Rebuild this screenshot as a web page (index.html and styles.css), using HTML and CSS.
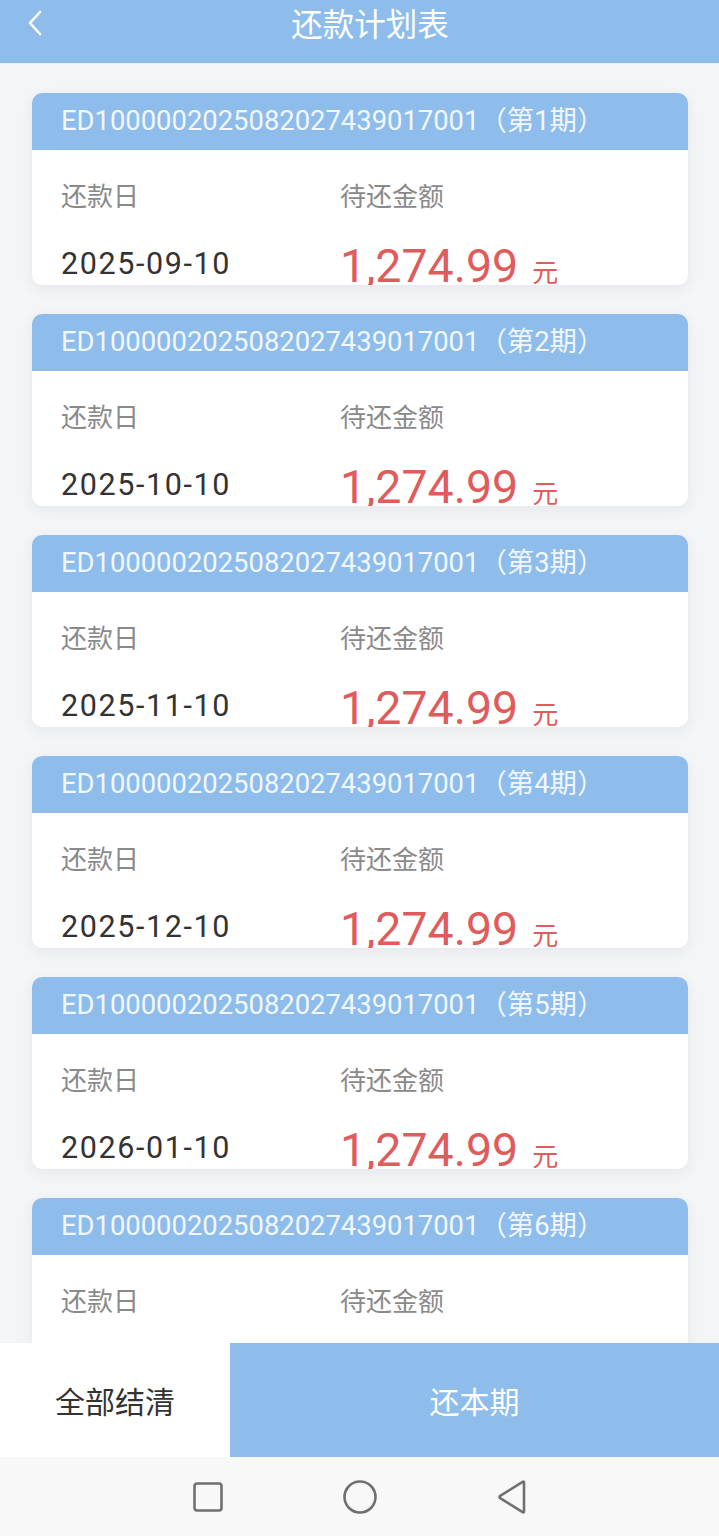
FILE: index.html
```html
<!DOCTYPE html>
<html lang="zh-CN">

<head>
    <meta charset="UTF-8">
    <meta name="viewport" content="width=device-width, initial-scale=1.0">
    <title>还款计划表</title>
    <link rel="stylesheet" href="styles.css">
</head>

<body>
    <header class="topbar">
        <svg class="back" width="20" height="28" viewBox="0 0 20 28">
            <path d="M15 3 L5 14 L15 25" fill="none" stroke="#fff" stroke-width="2.6" stroke-linecap="round" stroke-linejoin="round" />
        </svg>
        <h1>还款计划表</h1>
    </header>

    <main class="plan-list">
        <div class="card">
            <div class="card-head">ED1000002025082027439017001（第1期）</div>
            <div class="card-body">
                <div class="col col-date">
                    <div class="label">还款日</div>
                    <div class="date">2025-09-10</div>
                </div>
                <div class="col col-amount">
                    <div class="label">待还金额</div>
                    <div class="amount">1,274.99<span class="unit">元</span></div>
                </div>
            </div>
        </div>
        <div class="card">
            <div class="card-head">ED1000002025082027439017001（第2期）</div>
            <div class="card-body">
                <div class="col col-date">
                    <div class="label">还款日</div>
                    <div class="date">2025-10-10</div>
                </div>
                <div class="col col-amount">
                    <div class="label">待还金额</div>
                    <div class="amount">1,274.99<span class="unit">元</span></div>
                </div>
            </div>
        </div>
        <div class="card">
            <div class="card-head">ED1000002025082027439017001（第3期）</div>
            <div class="card-body">
                <div class="col col-date">
                    <div class="label">还款日</div>
                    <div class="date">2025-11-10</div>
                </div>
                <div class="col col-amount">
                    <div class="label">待还金额</div>
                    <div class="amount">1,274.99<span class="unit">元</span></div>
                </div>
            </div>
        </div>
        <div class="card">
            <div class="card-head">ED1000002025082027439017001（第4期）</div>
            <div class="card-body">
                <div class="col col-date">
                    <div class="label">还款日</div>
                    <div class="date">2025-12-10</div>
                </div>
                <div class="col col-amount">
                    <div class="label">待还金额</div>
                    <div class="amount">1,274.99<span class="unit">元</span></div>
                </div>
            </div>
        </div>
        <div class="card">
            <div class="card-head">ED1000002025082027439017001（第5期）</div>
            <div class="card-body">
                <div class="col col-date">
                    <div class="label">还款日</div>
                    <div class="date">2026-01-10</div>
                </div>
                <div class="col col-amount">
                    <div class="label">待还金额</div>
                    <div class="amount">1,274.99<span class="unit">元</span></div>
                </div>
            </div>
        </div>
        <!-- last card runs under the action bar -->
        <div class="card">
            <div class="card-head">ED1000002025082027439017001（第6期）</div>
            <div class="card-body">
                <div class="col col-date">
                    <div class="label">还款日</div>
                </div>
                <div class="col col-amount">
                    <div class="label">待还金额</div>
                </div>
            </div>
        </div>
    </main>

    <footer class="action-bar">
        <button class="btn-settle">全部结清</button>
        <button class="btn-pay">还本期</button>
    </footer>

    <nav class="sys-nav">
        <svg width="32" height="32" viewBox="0 0 32 32">
            <rect x="2.5" y="2.5" width="27" height="27" rx="2.5" fill="none" stroke="#707070" stroke-width="2.6" />
        </svg>
        <svg width="36" height="36" viewBox="0 0 36 36">
            <circle cx="18" cy="18" r="15.5" fill="none" stroke="#707070" stroke-width="2.6" />
        </svg>
        <svg width="32" height="36" viewBox="0 0 32 36">
            <path d="M28 3.5 L28 32.5 Q28 34 26.6 33.2 L4.2 19.2 Q2.8 18 4.2 16.8 L26.6 2.8 Q28 2 28 3.5 Z" fill="none" stroke="#707070" stroke-width="2.6" stroke-linejoin="round" />
        </svg>
    </nav>
</body>

</html>
```

FILE: styles.css
```css
body {
    margin: 0;
    width: 719px;
    height: 1536px;
    display: flex;
    flex-direction: column;
    overflow: hidden;
    background: #f4f5f7;
    font-family: Roboto, 'Noto Sans CJK SC', sans-serif;
}

.topbar {
    height: 63px;
    flex: none;
    display: flex;
    justify-content: center;
    background: #8ebdec;
    border-bottom: 1px solid #e4f1fb;
    position: relative;
}

.topbar h1 {
    margin: 0;
    padding-left: 21px;
    font-family: 'Noto Sans CJK SC', sans-serif;
    font-size: 31.5px;
    font-weight: 400;
    line-height: 44px;
    color: #fff;
}

.back {
    position: absolute;
    left: 25px;
    top: 9px;
}

.plan-list {
    flex: 1;
    overflow: hidden;
    padding: 29px 31px 0 32px;
    display: flex;
    flex-direction: column;
    gap: 29px;
}

.card {
    flex: none;
    height: 192px;
    border-radius: 10px;
    overflow: hidden;
    background: #fff;
    box-shadow: 0 4px 14px rgba(40, 60, 90, 0.07);
}

.card-head {
    height: 57px;
    padding-left: 29px;
    background: #8ebdec;
    color: #f2f7fd;
    font-size: 27.4px;
    line-height: 57px;
    white-space: nowrap;
}

.card-body {
    display: flex;
    padding: 30px 0 0 29px;
}

.col-date {
    width: 279px;
}

.label {
    font-family: 'Noto Sans CJK SC', sans-serif;
    font-size: 26px;
    line-height: 30px;
    color: #8a8a8a;
}

.date {
    margin-top: 34px;
    font-size: 30.5px;
    line-height: 40px;
    letter-spacing: 1.6px;
    color: #333;
}

.amount {
    margin-top: 31px;
    font-size: 46.5px;
    line-height: 50px;
    color: #e05b5b;
    white-space: nowrap;
}

.unit {
    margin-left: 14px;
    font-family: 'Noto Sans CJK SC', sans-serif;
    font-size: 26px;
}

.action-bar {
    height: 114px;
    flex: none;
    display: flex;
}

.action-bar button {
    border: none;
    margin: 0;
    padding: 0;
    font-family: 'Noto Sans CJK SC', sans-serif;
    font-size: 30px;
}

.btn-settle {
    width: 230px;
    background: #fff;
    color: #333;
}

.btn-pay {
    flex: 1;
    background: #8ebdec;
    color: #fff;
}

.sys-nav {
    height: 79px;
    flex: none;
    display: flex;
    align-items: center;
    justify-content: center;
    gap: 118px;
    background: #f8f8f8;
}
```
